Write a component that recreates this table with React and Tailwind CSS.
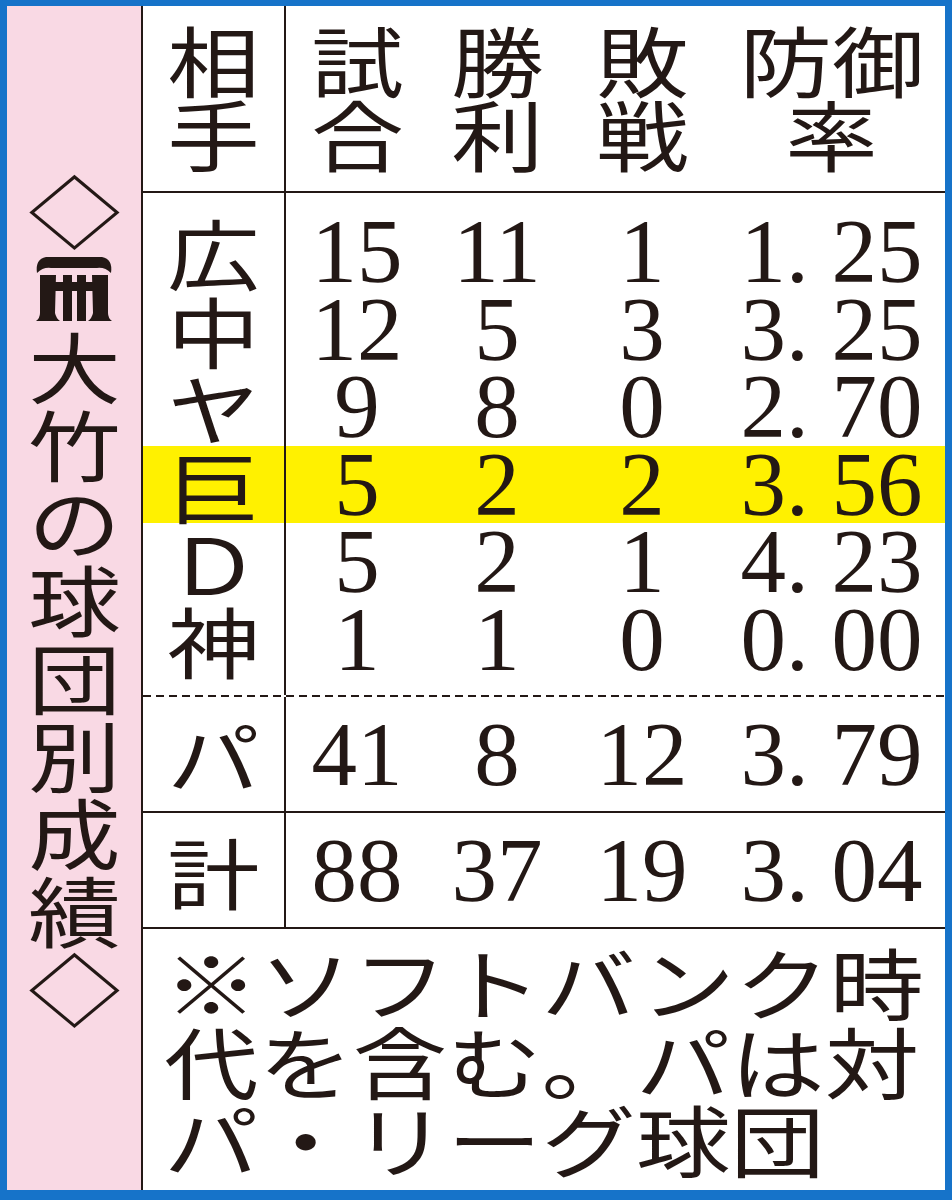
const rows = [
  ["広", "15", "11", "1", "1. 25"],
  ["中", "12", "5", "3", "3. 25"],
  ["ヤ", "9", "8", "0", "2. 70"],
  ["巨", "5", "2", "2", "3. 56"],
  ["Ｄ", "5", "2", "1", "4. 23"],
  ["神", "1", "1", "0", "0. 00"],
];

const jp = "font-['Noto_Sans_CJK_JP',sans-serif]";
const num = "font-['Liberation_Serif',serif]";
const cols = "grid grid-cols-[143px_142px_138px_152px_227px]";

const Flat = ({ children, className = "" }) => (
  <span className={`inline-block scale-x-[1.2] ${className}`}>{children}</span>
);

// team mark drawn in the title column
const Emblem = () => (
  <svg width="78" height="66" viewBox="0 0 78 66" fill="#231815">
    <path d="M2 17 Q0 3 11 1 L67 1 Q78 3 76 17 Q70 11 62 12 L16 12 Q8 11 2 17 Z" />
    <path d="M5 19 L21 19 L20 57 Q21 62 25 65 L1 65 Q5 62 5 57 Z" />
    <path d="M57 19 L73 19 L73 57 Q73 62 77 65 L53 65 Q57 62 58 57 Z" />
    <rect x="28" y="19" width="9" height="46" />
    <rect x="42" y="19" width="9" height="46" />
    <rect x="5" y="26" width="68" height="9" />
  </svg>
);

const Cells = ({ r, className = "" }) => (
  <div className={`${cols} ${className}`}>
    <div className={`border-r-2 border-[#231815] text-center ${jp} text-[77px]`}>
      <Flat>{r[0]}</Flat>
    </div>
    {r.slice(1).map((v, i) => (
      <div key={i} className={`text-center ${num} text-[91px] whitespace-pre`}>
        {v}
      </div>
    ))}
  </div>
);

export default function App() {
  const title = ["◇", "E", "大", "竹", "の", "球", "団", "別", "成", "績", "◇"];
  return (
    <div className="w-[952px] h-[1200px] bg-[#1673c9] pt-[6px] pl-[7px] pr-[7px] pb-[10px] text-[#231815]">
      <div className="flex h-full">
        <div className={`w-[136px] bg-[#f9d9e4] border-r-2 border-[#231815] flex flex-col items-center justify-center ${jp} text-[77px] leading-[77.8px]`}>
          {title.map((c, i) =>
            c === "E" ? (
              <div key={i} className="h-[77.8px] flex items-center justify-center pt-[5px]">
                <Emblem />
              </div>
            ) : (
              <div key={i} className="h-[77.8px]">
                <Flat>{c}</Flat>
              </div>
            )
          )}
        </div>

        <div className="flex-1 flex flex-col bg-white">
          <div className={`${cols} h-[187px] border-b-2 border-[#231815] ${jp} text-[77px] leading-[74px]`}>
            <div className="border-r-2 border-[#231815] flex flex-col items-center justify-center pb-[6px]">
              <Flat>相</Flat>
              <Flat>手</Flat>
            </div>
            {[["試", "合"], ["勝", "利"], ["敗", "戦"], ["防御", "率"]].map((h, i) => (
              <div key={i} className="flex flex-col items-center justify-center pb-[6px]">
                <Flat>{h[0]}</Flat>
                <Flat>{h[1]}</Flat>
              </div>
            ))}
          </div>

          <div className={`${cols} h-[20px]`}>
            <div className="border-r-2 border-[#231815]" />
          </div>
          {rows.map((r, i) => (
            <Cells key={i} r={r} className={`h-[77.5px] leading-[77.5px] ${i === 3 ? "bg-[#fff100]" : ""}`} />
          ))}
          <div className={`${cols} h-[17px]`}>
            <div className="border-r-2 border-[#231815]" />
          </div>
          <div className="h-[2px] bg-[repeating-linear-gradient(90deg,#231815_0_8px,transparent_8px_13px)]" />

          <Cells r={["パ", "41", "8", "12", "3. 79"]} className="h-[116px] leading-[116px] border-b-2 border-[#231815]" />
          <Cells r={["計", "88", "37", "19", "3. 04"]} className="h-[116px] leading-[116px] border-b-2 border-[#231815]" />

          <div className={`flex-1 pt-[13px] pl-[21px] ${jp} text-[78px] leading-[78.5px]`}>
            <div><Flat className="origin-left whitespace-nowrap scale-x-[1.21]">※ソフトバンク時</Flat></div>
            <div><Flat className="origin-left whitespace-nowrap scale-x-[1.21]">代を含む。パは対</Flat></div>
            <div><Flat className="origin-left whitespace-nowrap scale-x-[1.21]">パ・リーグ球団</Flat></div>
          </div>
        </div>
      </div>
    </div>
  );
}
